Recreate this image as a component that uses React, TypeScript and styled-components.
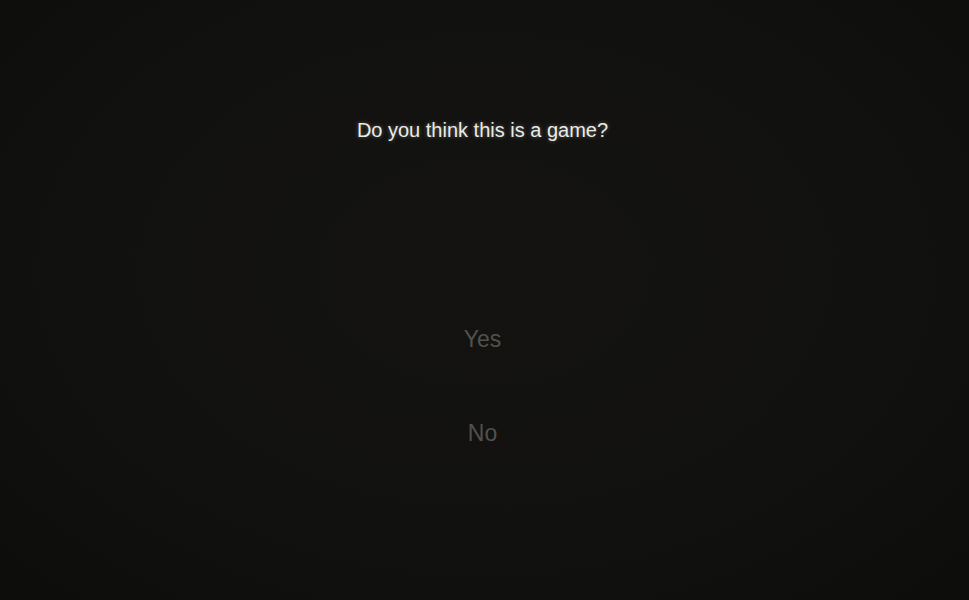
import styled, { createGlobalStyle } from "styled-components";

const GlobalStyle = createGlobalStyle`
  html, body {
    margin: 0;
    padding: 0;
    background: #10100f;
  }
`;

const Screen = styled.div`
  width: 100%;
  height: 600px;
  display: flex;
  flex-direction: column;
  align-items: center;
  padding: 120px 4px 0 0;
  box-sizing: border-box;
  background: radial-gradient(ellipse at 50% 45%, #141312 0%, #111110 60%, #0d0d0c 100%);
  font-family: "Liberation Sans", Arial, sans-serif;
`;

const Question = styled.h1`
  margin: 0;
  font-size: 20px;
  font-weight: normal;
  line-height: 1;
  color: #ecebe6;
  text-shadow: 0 0 4px rgba(255, 255, 235, 0.35);
`;

const Choices = styled.div`
  display: flex;
  flex-direction: column;
  align-items: center;
  gap: 71px;
  margin-top: 188px;
`;

const Choice = styled.button`
  border: none;
  background: none;
  padding: 0;
  font-family: inherit;
  font-size: 23px;
  line-height: 1;
  color: #51514f;
  cursor: pointer;

  &:hover {
    color: #8a8a88;
  }
`;

export default function App() {
  return (
    <>
      <GlobalStyle />
      <Screen>
        <Question>Do you think this is a game?</Question>
        <Choices>
          <Choice>Yes</Choice>
          <Choice>No</Choice>
        </Choices>
      </Screen>
    </>
  );
}
